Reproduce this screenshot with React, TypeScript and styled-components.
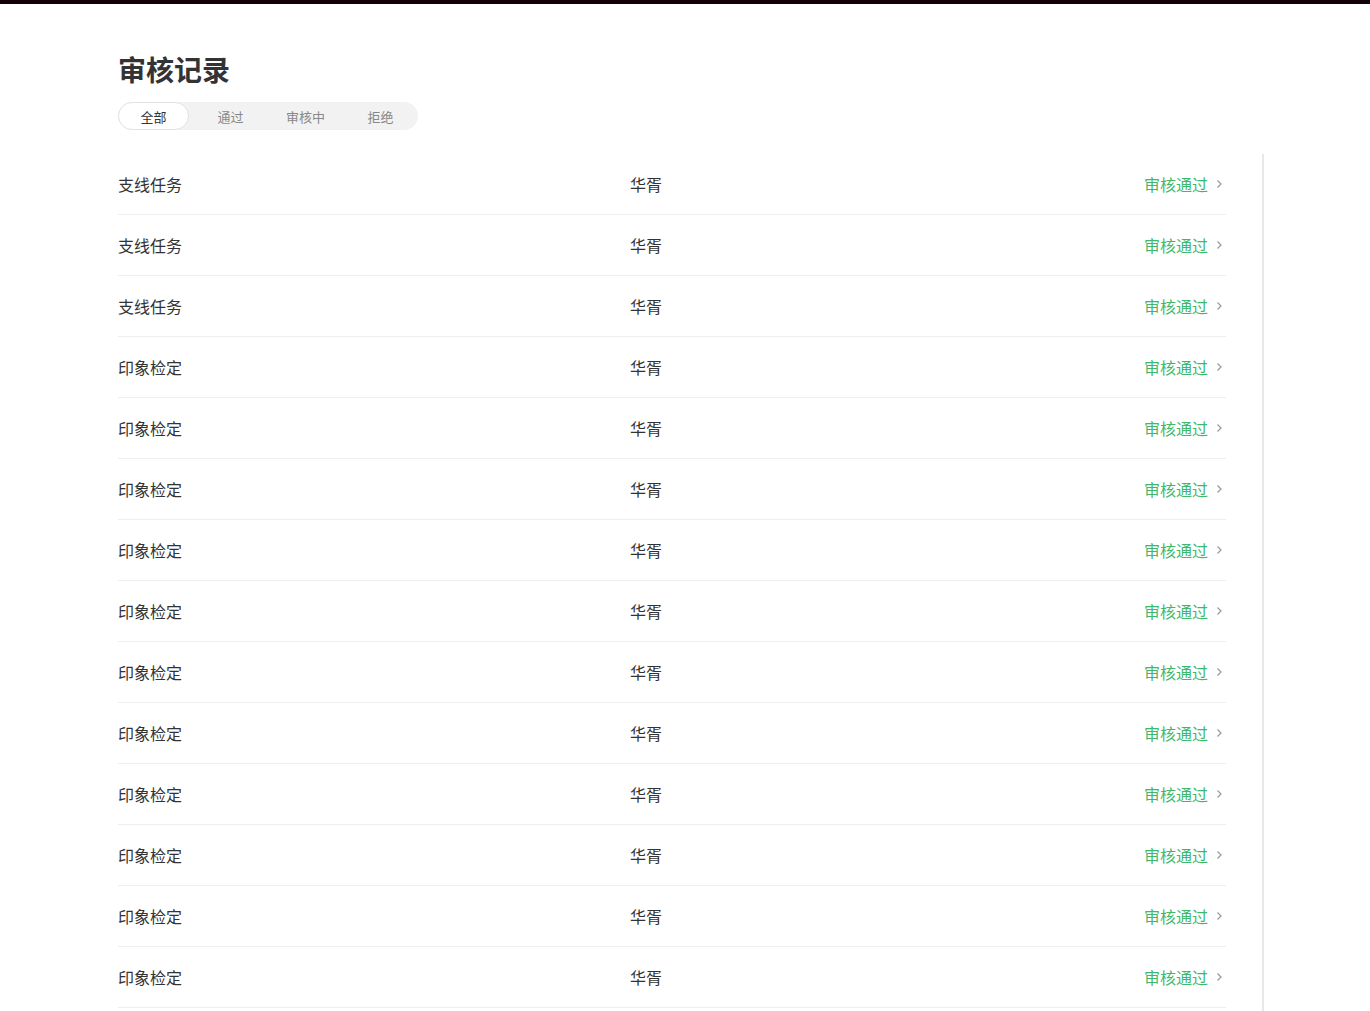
import React, { useState } from "react";
import styled, { createGlobalStyle, css } from "styled-components";

const GlobalStyle = createGlobalStyle`
  html, body {
    margin: 0;
    padding: 0;
    background: #fff;
    font-family: "Noto Sans CJK SC", "Noto Sans", sans-serif;
    color: #333;
  }
`;

const TopBar = styled.div`
  height: 4px;
  background: #130008;
`;

const Page = styled.div`
  padding: 0 0 0 118px;
`;

const Title = styled.h1`
  margin: 0;
  padding-top: 45px;
  font-size: 28px;
  line-height: 40px;
  font-weight: 700;
  color: #333;
`;

const Tabs = styled.div`
  margin-top: 13px;
  display: flex;
  width: 300px;
  height: 28px;
  box-sizing: border-box;
  border-radius: 14px;
  background: #f2f2f2;
`;

const Tab = styled.button<{ active?: boolean }>`
  width: 75px;
  height: 28px;
  box-sizing: border-box;
  border: 1px solid transparent;
  border-radius: 14px;
  background: transparent;
  font-family: inherit;
  font-size: 13px;
  color: #888;
  cursor: pointer;
  padding: 0;

  ${(props) =>
    props.active &&
    css`
      width: 71px;
      margin-right: 4px;
      background: #fff;
      border-color: #e3e3e3;
      color: #333;
    `}
`;

const ListWrap = styled.div`
  margin-top: 24px;
  width: 1146px;
  box-sizing: border-box;
  padding-right: 36px;
  padding-bottom: 24px;
  border-right: 2px solid #e8e8e8;
`;

const Row = styled.div`
  display: flex;
  align-items: center;
  height: 61px;
  box-sizing: border-box;
  padding-bottom: 1px;
  border-bottom: 1px solid #eeeeee;
  font-size: 16px;
  color: #333;
`;

const NameCell = styled.div`
  width: 512px;
`;

const UserCell = styled.div`
  flex: 1;
`;

const Status = styled.div`
  display: flex;
  align-items: center;
  gap: 8px;
  padding-right: 3px;
  color: #3fb86b;
`;

const Chevron = () => (
  <svg width="7" height="10" viewBox="0 0 7 10" fill="none">
    <path d="M1.5 1.5L5 5L1.5 8.5" stroke="#999" strokeWidth="1.2" />
  </svg>
);

const records = [
  ...Array(3).fill("支线任务"),
  ...Array(11).fill("印象检定"),
];

const tabs = ["全部", "通过", "审核中", "拒绝"];

export default function App() {
  const [tab, setTab] = useState(0);
  return (
    <>
      <GlobalStyle />
      <TopBar />
      <Page>
        <Title>审核记录</Title>
        <Tabs>
          {tabs.map((t, i) => (
            <Tab key={t} active={i === tab} onClick={() => setTab(i)}>
              {t}
            </Tab>
          ))}
        </Tabs>
        <ListWrap>
          {records.map((name, i) => (
            <Row key={i}>
              <NameCell>{name}</NameCell>
              <UserCell>华胥</UserCell>
              <Status>
                审核通过
                <Chevron />
              </Status>
            </Row>
          ))}
        </ListWrap>
      </Page>
    </>
  );
}
